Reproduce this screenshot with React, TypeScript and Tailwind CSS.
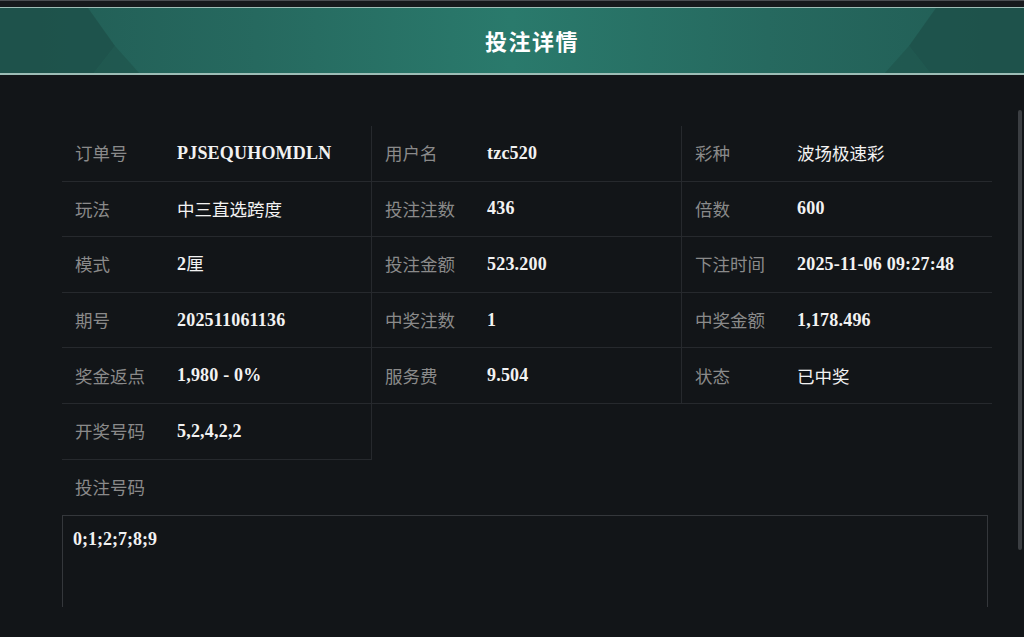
import React from 'react'

type Item = { label: string; value: React.ReactNode; cjk?: boolean }

const labelFont = { fontFamily: '"Noto Sans CJK SC", sans-serif' }
const valueFont = { fontFamily: '"Liberation Serif", "Noto Sans CJK SC", serif' }

const rows: Item[][] = [
    [
        { label: '订单号', value: 'PJSEQUHOMDLN' },
        { label: '用户名', value: 'tzc520' },
        { label: '彩种', value: '波场极速彩', cjk: true },
    ],
    [
        { label: '玩法', value: '中三直选跨度', cjk: true },
        { label: '投注注数', value: '436' },
        { label: '倍数', value: '600' },
    ],
    [
        { label: '模式', value: <>2<span className="font-normal text-[17.5px]" style={labelFont}>厘</span></> },
        { label: '投注金额', value: '523.200' },
        { label: '下注时间', value: '2025-11-06 09:27:48' },
    ],
    [
        { label: '期号', value: '202511061136' },
        { label: '中奖注数', value: '1' },
        { label: '中奖金额', value: '1,178.496' },
    ],
    [
        { label: '奖金返点', value: '1,980 - 0%' },
        { label: '服务费', value: '9.504' },
        { label: '状态', value: '已中奖', cjk: true },
    ],
]

function Cell({ item, right }: { item: Item; right?: boolean }) {
    return (
        <div className={`flex items-center h-[55.6px] border-b border-[#26292d] pl-[13px] ${right ? 'border-r' : ''}`}>
            <span className="w-[102px] text-[17.5px] text-[#8a8a8a]" style={labelFont}>{item.label}</span>
            <span
                className={`text-[#f2f2f2] ${item.cjk ? 'font-normal text-[17.5px]' : 'font-bold text-[18px] tracking-[0.2px]'}`}
                style={item.cjk ? labelFont : valueFont}
            >
                {item.value}
            </span>
        </div>
    )
}

function Decor({ flip }: { flip?: boolean }) {
    return (
        <svg
            width="150"
            height="66"
            viewBox="0 0 150 66"
            className={`absolute top-0 ${flip ? 'right-0 -scale-x-100' : 'left-0'}`}
        >
            <polygon points="0,0 88,0 115,38 93,66 0,66" fill="#1e4f48" opacity="0.75" />
            <polygon points="115,38 93,66 140,66" fill="#1f564e" opacity="0.8" />
        </svg>
    )
}

export default function App() {
    return (
        <div className="relative w-[1024px] h-[637px] overflow-hidden bg-[#121518]">
            <div className="h-[7px] bg-[#16191c] border-t border-[#4b4e52]" />
            <div className="relative h-[68px] border-t border-b-2 border-[#9dbdb6] bg-[linear-gradient(90deg,#215c54_0%,#26695f_25%,#2a7a6c_50%,#26695f_75%,#215c54_100%)] overflow-hidden">
                <Decor />
                <Decor flip />
                <div className="relative h-full flex items-center justify-center pl-[40px]">
                    <h1 className="text-[22px] font-bold text-white tracking-[1.5px]" style={labelFont}>投注详情</h1>
                </div>
            </div>

            <div className="pt-[51px] pl-[62px]">
                <div className="w-[930px] grid grid-cols-3">
                    {rows.map((r, i) => (
                        <React.Fragment key={i}>
                            <Cell item={r[0]} right />
                            <Cell item={r[1]} right />
                            <Cell item={r[2]} />
                        </React.Fragment>
                    ))}
                    <Cell item={{ label: '开奖号码', value: '5,2,4,2,2' }} right />
                </div>
                <div className="h-[55px] flex items-center pl-[13px] text-[17.5px] text-[#8a8a8a]" style={labelFont}>
                    投注号码
                </div>
                <div className="w-[926px] h-[92px] border-t border-x border-[#34373b] px-[10px] pt-[10px]">
                    <span className="text-[18px] font-bold text-[#f2f2f2]" style={valueFont}>0;1;2;7;8;9</span>
                </div>
            </div>

            <div className="absolute right-[2px] top-[110px] w-[4px] h-[440px] rounded-full bg-[#3b3e42]" />
        </div>
    )
}
